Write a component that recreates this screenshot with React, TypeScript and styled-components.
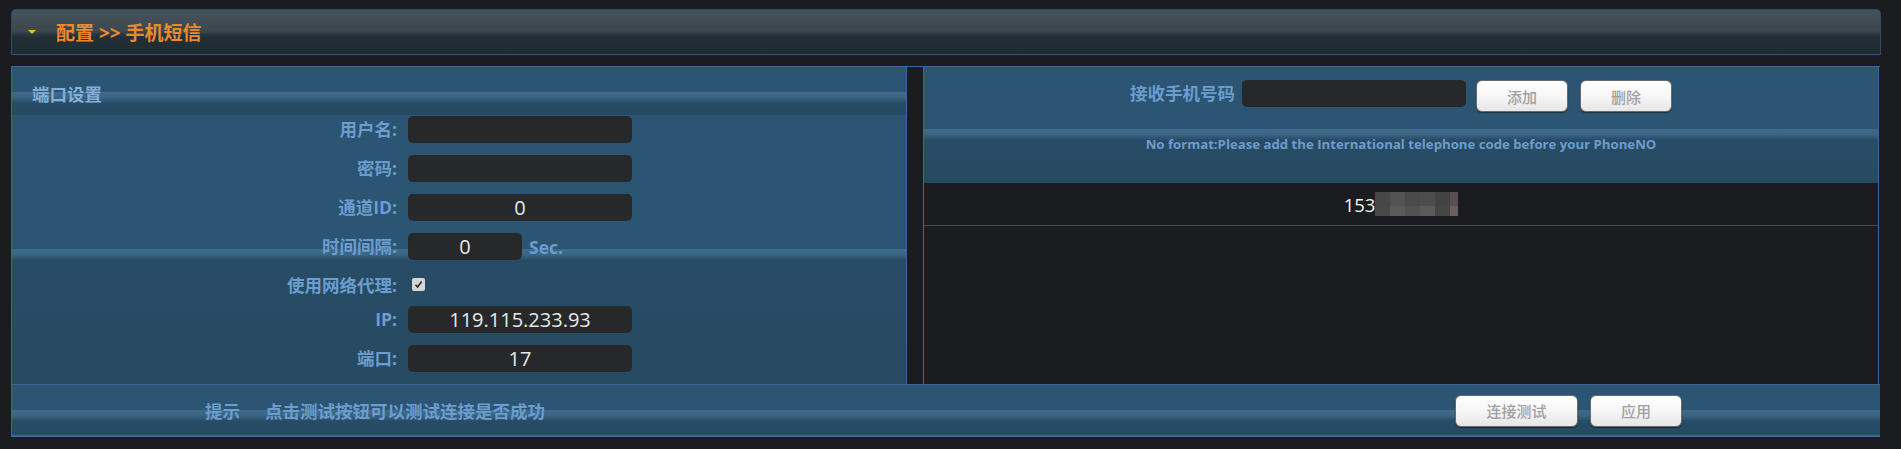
import styled, { createGlobalStyle, css } from "styled-components";

const GlobalStyle = createGlobalStyle`
    body{
        margin:0;
        background:#1b1c1f;
        font-family:"Open Sans","Noto Sans CJK SC",sans-serif;
    }
`

const stripe = (shift: number) => css`
    background:linear-gradient(
        to bottom,
        #2c5473 0,
        #2c5473 calc(50% + ${shift}px),
        #3e6b8c calc(50% + ${shift}px),
        #3a6686 calc(50% + ${shift + 5}px),
        #284c65 calc(50% + ${shift + 11}px),
        #264a62 100%
    );
`

const Page = styled.div`
    padding:9px 20px 11px 11px;
    min-height:449px;
    box-sizing:border-box;
`

const TitleBar = styled.div`
    width:1870px;
    height:46px;
    box-sizing:border-box;
    display:flex;
    align-items:center;
    padding-left:16px;
    border:1px solid #2f4a66;
    border-bottom-color:#34537a;
    border-radius:5px 5px 0 0;
    background:linear-gradient(
        to bottom,
        #47525a 0%,
        #3c474e 48%,
        #2b373e 55%,
        #222f36 62%,
        #1f2c32 100%
    );
`

const Caret = styled.span`
    width:0;
    height:0;
    border-left:4px solid transparent;
    border-right:4px solid transparent;
    border-top:4px solid #e9c11f;
    margin-right:20px;
`

const Title = styled.h1`
    margin:0;
    font-size:19px;
    font-weight:700;
    color:#ec8a2b;
`

const Main = styled.div`
    margin-top:11px;
    width:1869px;
    box-sizing:border-box;
    border-top:1px solid #3c6899;
    border-left:1px solid #3c6899;
`

const Columns = styled.div`
    display:grid;
    grid-template-columns:895px 956px;
    column-gap:16px;
    height:317px;
`

const LeftPanel = styled.div`
    display:flex;
    flex-direction:column;
    border-right:1px solid #3c6899;
`

const SectionHead = styled.div`
    height:48px;
    box-sizing:border-box;
    padding:4px 0 0 20px;
    display:flex;
    align-items:center;
    font-size:17.5px;
    font-weight:700;
    color:#84aed8;
    ${stripe(1)}
`

const Form = styled.div`
    flex:1;
    display:flex;
    flex-direction:column;
    gap:12px;
    padding-top:1px;
    ${stripe(0)}
`

const FieldRow = styled.div<{ $h?: number }>`
    display:grid;
    grid-template-columns:385px auto;
    column-gap:11px;
    align-items:center;
    height:${p => p.$h ?? 27}px;
`

const Label = styled.label`
    text-align:right;
    font-size:17.5px;
    font-weight:700;
    line-height:27px;
    color:#6b9dcf;
    white-space:nowrap;
`

const Field = styled.div`
    display:flex;
    align-items:center;
`

const TextInput = styled.input<{ $w?: number }>`
    width:${p => p.$w ?? 224}px;
    height:27px;
    box-sizing:border-box;
    padding:0;
    border:0;
    border-radius:5px;
    outline:none;
    background:#27282a;
    color:#e8e8e8;
    font-family:"Open Sans",sans-serif;
    font-size:20px;
    text-align:center;
`

const Unit = styled.span`
    margin-left:7px;
    font-size:17.5px;
    font-weight:700;
    color:#6b9dcf;
`

const CheckBox = styled.span`
    margin:-3px 0 0 4px;
    width:13px;
    height:13px;
    border-radius:2px;
    background:#d6d6d6;
    display:flex;
    align-items:center;
    justify-content:center;
`

const RightPanel = styled.div`
    display:flex;
    flex-direction:column;
    border-left:1px solid #3c6899;
    border-right:1px solid #3c6899;
`

const PhoneHead = styled.div`
    height:116px;
    box-sizing:border-box;
    display:flex;
    flex-direction:column;
    align-items:center;
    padding-top:13px;
    ${stripe(4)}
`

const AddRow = styled.div`
    display:flex;
    align-items:flex-start;
    height:32px;
    ${Label}{ margin-right:7px; }
    ${TextInput}{ margin-right:10px; }
`

const Button = styled.button<{ $w?: number }>`
    width:${p => p.$w ?? 92}px;
    height:32px;
    box-sizing:border-box;
    margin-right:12px;
    border:1px solid #6a6a6a;
    border-radius:6px;
    background:linear-gradient(to bottom,#ffffff 0%,#f6f6f6 50%,#e6e6e6 100%);
    box-shadow:0 1px 1px rgba(0,0,0,0.45);
    color:#a0a0a0;
    font-family:"Open Sans","Noto Sans CJK SC",sans-serif;
    font-size:15px;
    font-weight:500;
    &:last-child{ margin-right:0; }
`

const Hint = styled.div`
    margin-top:23px;
    font-size:13.2px;
    line-height:18px;
    font-weight:700;
    color:#6b9dcf;
`

const PhoneList = styled.div`
    flex:1;
    background:#1b1c1f;
`

const PhoneItem = styled.div`
    height:42px;
    border-bottom:1px solid #46484b;
    display:flex;
    align-items:center;
    justify-content:center;
    font-size:18.5px;
    color:#f2f2f2;
`

const Footer = styled.div`
    height:53px;
    box-sizing:border-box;
    border-top:1px solid #3b6598;
    border-bottom:2px solid #3c69a0;
    display:flex;
    align-items:center;
    padding:1px 198px 0 193px;
    ${stripe(0)}
`

const FooterText = styled.span<{ $gap?: number }>`
    margin-left:${p => p.$gap ?? 0}px;
    font-size:17.5px;
    font-weight:700;
    color:#6b9dcf;
`

const ButtonGroup = styled.div`
    margin-left:auto;
    display:flex;
`

const mosaic = [
    ["#474747", "#535353", "#4a4a4a", "#4d4d4d", "#434343", "#585050"],
    ["#484848", "#5b5b5b", "#525252", "#5a5a5a", "#454545", "#6a5f5c"],
]

function Mosaic(){
    return <svg width="83" height="24" viewBox="0 0 83 24">
        {mosaic.map((row, r) => row.map((c, i) =>
            <rect key={r + "-" + i} x={i * 15} y={r * 14} width={i === 5 ? 8 : 15} height={r ? 10 : 14} fill={c} />
        ))}
    </svg>
}

function App(){
    return <>
        <GlobalStyle />
        <Page>
            <TitleBar>
                <Caret />
                <Title>配置 &gt;&gt; 手机短信</Title>
            </TitleBar>
            <Main>
                <Columns>
                    <LeftPanel>
                        <SectionHead>端口设置</SectionHead>
                        <Form>
                            <FieldRow><Label>用户名:</Label><Field><TextInput defaultValue="" /></Field></FieldRow>
                            <FieldRow><Label>密码:</Label><Field><TextInput type="password" defaultValue="" /></Field></FieldRow>
                            <FieldRow><Label>通道ID:</Label><Field><TextInput defaultValue="0" /></Field></FieldRow>
                            <FieldRow>
                                <Label>时间间隔:</Label>
                                <Field><TextInput $w={114} defaultValue="0" /><Unit>Sec.</Unit></Field>
                            </FieldRow>
                            <FieldRow $h={22}>
                                <Label>使用网络代理:</Label>
                                <Field>
                                    <CheckBox>
                                        <svg width="9" height="9" viewBox="0 0 9 9">
                                            <path d="M1.5 4.8 L3.6 7 L7.6 1.6" fill="none" stroke="#2a2a2a" strokeWidth="1.6" />
                                        </svg>
                                    </CheckBox>
                                </Field>
                            </FieldRow>
                            <FieldRow><Label>IP:</Label><Field><TextInput defaultValue="119.115.233.93" /></Field></FieldRow>
                            <FieldRow><Label>端口:</Label><Field><TextInput defaultValue="17" /></Field></FieldRow>
                        </Form>
                    </LeftPanel>
                    <RightPanel>
                        <PhoneHead>
                            <AddRow>
                                <Label>接收手机号码</Label>
                                <TextInput defaultValue="" />
                                <Button>添加</Button>
                                <Button>删除</Button>
                            </AddRow>
                            <Hint>No format:Please add the International telephone code before your PhoneNO</Hint>
                        </PhoneHead>
                        <PhoneList>
                            <PhoneItem>153<Mosaic /></PhoneItem>
                        </PhoneList>
                    </RightPanel>
                </Columns>
                <Footer>
                    <FooterText>提示</FooterText>
                    <FooterText $gap={25}>点击测试按钮可以测试连接是否成功</FooterText>
                    <ButtonGroup>
                        <Button $w={123}>连接测试</Button>
                        <Button>应用</Button>
                    </ButtonGroup>
                </Footer>
            </Main>
        </Page>
    </>
}

export default App;
